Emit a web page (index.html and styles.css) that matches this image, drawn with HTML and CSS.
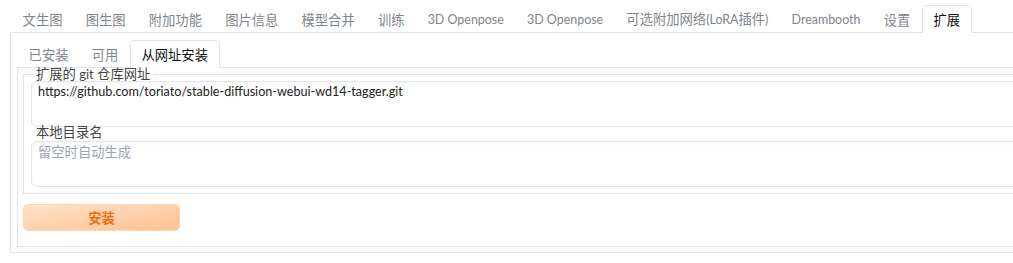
FILE: index.html
```html
<!DOCTYPE html>
<html lang="zh-CN">
<head>
<meta charset="utf-8">
<title>扩展</title>
<link rel="stylesheet" href="styles.css">
</head>
<body>
<div class="app">
  <div class="tabnav top-nav">
    <button class="tab">文生图</button>
    <button class="tab">图生图</button>
    <button class="tab">附加功能</button>
    <button class="tab">图片信息</button>
    <button class="tab">模型合并</button>
    <button class="tab">训练</button>
    <button class="tab"><span class="lat">3D Openpose</span></button>
    <button class="tab"><span class="lat">3D Openpose</span></button>
    <button class="tab">可选附加网络<span class="lat">(LoRA</span>插件<span class="lat">)</span></button>
    <button class="tab"><span class="lat">Dreambooth</span></button>
    <button class="tab">设置</button>
    <button class="tab active">扩展</button>
  </div>
  <div class="panel outer">
    <div class="tabnav inner-nav">
      <button class="tab">已安装</button>
      <button class="tab">可用</button>
      <button class="tab active">从网址安装</button>
    </div>
    <div class="panel inner">
      <fieldset class="group">
        <legend class="label legend">扩展的<span class="lat"> git </span>仓库网址</legend>
        <textarea class="input url">https://github.com/toriato/stable-diffusion-webui-wd14-tagger.git</textarea>
        <label class="label second">本地目录名</label>
        <textarea class="input" placeholder="留空时自动生成"></textarea>
      </fieldset>
      <button class="primary">安装</button>
    </div>
  </div>
</div>
</body>
</html>
```

FILE: styles.css
```css
* { box-sizing: border-box; }
html, body { margin: 0; padding: 0; background: #fff; overflow: hidden; }
body {
  font-family: "Lato", "Noto Sans CJK SC", sans-serif;
  font-size: 13.3px;
  color: #1f2937;
}
.lat { font-size: 12.45px; }
.app { width: 1090px; padding: 5px 0 0 10px; }

.tabnav { display: flex; border-bottom: 1px solid #e3e4e8; }
.top-nav { padding-left: 1px; }
.tab {
  font: inherit;
  background: none;
  border: 1px solid transparent;
  border-bottom: none;
  border-radius: 5px 5px 0 0;
  padding: 0 10.6px;
  height: 28px;
  line-height: 26px;
  color: #80858c;
  margin-bottom: -1px;
  white-space: nowrap;
}
.tab.active { border-color: #e3e4e8; background: #fff; color: #111; }

.panel { border: 1px solid #e3e4e8; border-top: none; }
.outer { padding: 7px 6px 5px 6px; }
.inner { padding: 0 5px 15px 5px; }

.group {
  margin: 0;
  border: 1px solid #e3e4e8;
  padding: 1px 6px 6px 7px;
}
.label { display: block; font-size: 13.3px; line-height: 12px; color: #444; }
.legend { margin-left: 2px; padding: 0 3px; }
.legend .lat { font-size: 13px; }
.second { line-height: 13px; margin: -1px 0 2px 5px; }

.input {
  display: block;
  width: 100%;
  height: 46px;
  border: 1px solid #e3e4e8;
  border-radius: 6px;
  padding: 1px 6px;
  font: inherit;
  line-height: 18px;
  color: #222;
  resize: none;
  background: #fff;
  box-shadow: inset 0 3px 6px -3px rgba(0, 0, 0, 0.06);
  outline: none;
}
.url { font-size: 12.6px; }
.input::placeholder { color: #9ca3af; }

.primary {
  display: block;
  margin-top: 10px;
  width: 157px;
  height: 27px;
  border: 1px solid #fed7aa;
  border-radius: 5px;
  background: linear-gradient(to bottom right, #ffe3cc, #fdc091);
  color: #ee6f12;
  font: inherit;
  font-weight: 600;
}
```
